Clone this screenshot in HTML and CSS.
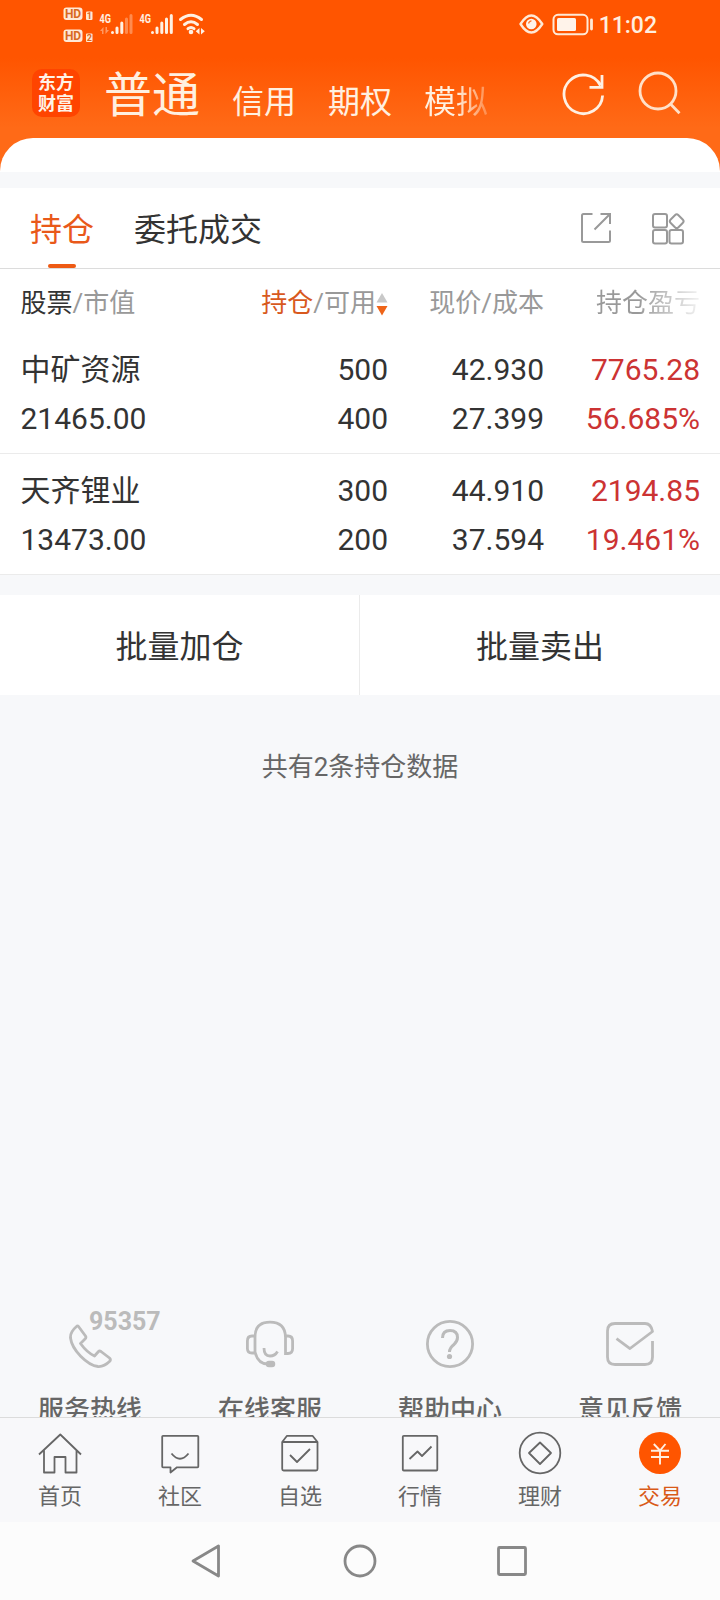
FILE: index.html
```html
<!DOCTYPE html>
<html lang="zh-CN">
<head>
<meta charset="utf-8">
<title>交易</title>
<link rel="stylesheet" href="styles.css">
</head>
<body>
<div class="phone">
  <header class="header">
    <div class="status">
      <svg class="status-left" width="150" height="48" viewBox="60 0 150 48">
        <g fill="#ffe9d6">
          <rect x="63.500" y="7.500" width="19" height="12.500" rx="3"/>
          <rect x="63.500" y="29.500" width="19" height="12.500" rx="3"/>
          <rect x="86" y="11.500" width="6.500" height="8.500" rx="1"/>
          <rect x="86" y="33.500" width="6.500" height="8.500" rx="1"/>
        </g>
        <g class="hd">
          <text x="64.900" y="18.200">HD</text>
          <text x="64.900" y="40.200">HD</text>
          <text class="sim" x="86.800" y="19">1</text>
          <text class="sim" x="86.800" y="41">2</text>
        </g>
        <g class="net">
          <text x="99.500" y="22.800" textLength="11.500" lengthAdjust="spacingAndGlyphs">4G</text>
          <text x="139.500" y="22.800" textLength="11.500" lengthAdjust="spacingAndGlyphs">4G</text>
        </g>
        <g stroke="#fff0e2" stroke-width="3" stroke-linecap="round">
          <path d="M112.500 32.500v0M117 28v4.500M121.800 23v9.500"/>
          <path d="M126.500 19v13.500M131 15.500v17" opacity=".35"/>
          <path d="M152.500 32.500v0M157 28v4.500M161.800 23v9.500M166.500 19v13.500M171.300 15.500v17"/>
        </g>
        <g opacity=".45" fill="#ffe9d6"><path d="M100 31l3.500-4v7h-1.500v-3zM109 30l-3.500 4v-7h1.500v3z"/></g>
        <g fill="none" stroke="#fff0e2" stroke-width="3" stroke-linecap="round">
          <path d="M180.500 19.500q10.500-8.500 21 0M184.500 24.500q6.500-5.500 13 0M188 28.700q3-2.500 6 0"/>
        </g>
        <circle cx="191" cy="32" r="2.300" fill="#fff0e2"/>
        <path d="M199.500 28v6.500l-3.800-3.200zM201 28v6.500l3.800-3.200z" fill="#fff0e2"/>
      </svg>
      <div class="status-right">
        <svg width="75" height="24" viewBox="518 12 75 24" fill="none" stroke="#ffe9d6">
          <path d="M520.500 24q10.800-17 21.800 0q-11 17-21.800 0z" stroke-width="2.400" stroke-linejoin="round"/>
          <circle cx="531.300" cy="24" r="5.300" fill="#fff3ea" stroke="none"/>
          <path d="M528.500 23.500q.500-2.500 3-2.700" stroke="#ff7a33" stroke-width="1.300"/>
          <rect x="553.500" y="14.800" width="34" height="19.500" rx="4.500" stroke-width="2"/>
          <rect x="557" y="18" width="19" height="13" rx="1.500" fill="#fff3ea" stroke="none"/>
          <path d="M591.500 20v9" stroke-width="2.800" stroke-linecap="round"/>
        </svg>
        <span class="clock">11:02</span>
      </div>
    </div>
    <div class="nav">
      <div class="logo"><span>东方</span><span>财富</span></div>
      <nav class="markets">
        <span class="market current">普通</span>
        <span class="market">信用</span>
        <span class="market">期权</span>
        <span class="market fading">模拟</span>
      </nav>
      <svg class="refresh" width="44" height="44" viewBox="562 71 44 44" fill="none" stroke="#fff0e2" stroke-width="2.800">
        <path d="M602.600 94.500A19.300 19.300 0 1 1 600.500 84.500M602 74v12.300H589.500"/>
      </svg>
      <svg class="search" width="44" height="44" viewBox="638 71 44 44" fill="none" stroke="#ffe0c8" stroke-width="2.800">
        <circle cx="658" cy="91" r="18"/><path d="M670.500 104l9 9.300"/>
      </svg>
    </div>
    <div class="sheet"></div>
  </header>

  <section class="tabs">
    <span class="tab active">持仓</span>
    <span class="tab">委托成交</span>
    <svg class="share" width="32" height="32" viewBox="580 212 32 32" fill="none" stroke="#999" stroke-width="2">
      <path d="M592.500 214H583.500Q582 214 582 215.500V240.500Q582 242 583.500 242H608.500Q610 242 610 240.500V230.500M600.500 214H610V224M609.500 214.500L594.500 229.500"/>
    </svg>
    <svg class="modules" width="34" height="34" viewBox="651 212 34 34" fill="none" stroke="#999" stroke-width="2">
      <rect x="653" y="214" width="14" height="13.500" rx="2"/>
      <rect x="653" y="230" width="14" height="13.500" rx="2"/>
      <rect x="669.500" y="230" width="13.500" height="13.500" rx="2"/>
      <rect x="671.200" y="215.700" width="11" height="11" rx="2.500" transform="rotate(45 676.700 221.200)"/>
    </svg>
  </section>

  <section class="table">
    <div class="row head">
      <span class="first"><b>股票</b>/市值</span>
      <span class="sortable"><span><em>持仓</em>/可用</span><svg width="12" height="24" viewBox="0 0 12 24"><path d="M6 1l5.500 9.500H.5z" fill="#c8c8c8"/><path d="M6 23.500l5.500-9.500H.5z" fill="#ee6418"/></svg></span>
      <span>现价/成本</span>
      <span class="fade-head">持仓盈亏</span>
    </div>
    <div class="row">
      <span class="first">中矿资源</span><span>500</span><span>42.930</span><span class="up">7765.28</span>
      <span class="first">21465.00</span><span>400</span><span>27.399</span><span class="up">56.685%</span>
    </div>
    <div class="row">
      <span class="first">天齐锂业</span><span>300</span><span>44.910</span><span class="up">2194.85</span>
      <span class="first">13473.00</span><span>200</span><span>37.594</span><span class="up">19.461%</span>
    </div>
  </section>

  <section class="actions"><span>批量加仓</span><span>批量卖出</span></section>
  <p class="summary">共有2条持仓数据</p>

  <section class="support">
    <div class="help">
      <div class="phone-icon">
        <svg width="48" height="48" viewBox="66 1320 48 48" fill="none" stroke="#bbb" stroke-width="2.800" stroke-linejoin="round">
          <path d="M76.500 1326.500Q70 1332 70.500 1338C72 1350 87 1365 98 1366.500Q104 1367 110 1361Q111 1359.500 109.500 1358L101 1351.500Q99.500 1350.500 98.500 1351.500L94.500 1356Q87 1352.500 80.500 1343.500L85 1339Q86.500 1337.500 85.500 1336L78.500 1326.500Q77.500 1325.500 76.500 1326.500Z"/>
        </svg>
        <span class="hotline">95357</span>
      </div>
      <span class="help-label">服务热线</span>
    </div>
    <div class="help">
      <svg width="52" height="48" viewBox="244 1320 52 48" fill="none" stroke="#bbb" stroke-width="2.800">
        <path d="M255 1353.500V1337Q255 1322.200 270 1322.200T285.500 1337V1353.500H288Q292.600 1353.500 292.600 1348.500V1341Q292.600 1336 288 1336H285.500M255 1336H252Q247.400 1336 247.400 1341V1348.500Q247.400 1353 252 1353H255M255 1352Q258 1364 268 1364"/>
        <path d="M264 1348Q264 1356 270 1356Q275 1356 277.500 1351.500"/>
        <rect x="266.500" y="1361.500" width="8" height="5" rx="2.500" fill="#bbb" stroke-width="1.500"/>
      </svg>
      <span class="help-label">在线客服</span>
    </div>
    <div class="help">
      <svg width="48" height="48" viewBox="426 1320 48 48" fill="none" stroke="#bbb" stroke-width="2.800">
        <circle cx="450" cy="1344" r="22.600"/>
        <path d="M442.500 1338Q442.500 1330.500 450 1330.500T457.500 1337.500Q457.500 1341 454 1344.500Q449.500 1348 449.500 1352" stroke-width="3"/>
        <circle cx="449.500" cy="1356.500" r="2.600" fill="#bbb" stroke="none"/>
      </svg>
      <span class="help-label">帮助中心</span>
    </div>
    <div class="help">
      <svg width="48" height="48" viewBox="606 1320 48 48" fill="none" stroke="#bbb" stroke-width="2.800" stroke-linejoin="round">
        <path d="M652.500 1341V1357Q652.500 1364.500 645 1364.500H615Q607.500 1364.500 607.500 1357V1331Q607.500 1323.500 615 1323.500H645Q651 1323.500 652.500 1331.500L630 1348.500L616.500 1338.500"/>
      </svg>
      <span class="help-label">意见反馈</span>
    </div>
  </section>

  <nav class="tabbar">
    <div class="item">
      <svg width="44" height="44" viewBox="38 1431 44 44" fill="none" stroke="#666" stroke-width="1.800" stroke-linejoin="round">
        <path d="M39 1454.500L60.300 1434.500L81 1454.500M44 1450.500V1472.500H54.500V1457H65.500V1472.500H76.500V1450.500"/>
      </svg><span>首页</span>
    </div>
    <div class="item">
      <svg width="44" height="44" viewBox="158 1431 44 44" fill="none" stroke="#666" stroke-width="1.800" stroke-linejoin="round">
        <path d="M163 1435.800H197.500Q198.300 1435.800 198.300 1436.600V1466.500Q198.300 1467.300 197.500 1467.300H177L170.500 1472.500V1467.300H163Q162.200 1467.300 162.200 1466.500V1436.600Q162.200 1435.800 163 1435.800zM171.500 1453.500Q180 1464 188.500 1453.500"/>
      </svg><span>社区</span>
    </div>
    <div class="item">
      <svg width="44" height="44" viewBox="278 1431 44 44" fill="none" stroke="#666" stroke-width="1.800" stroke-linejoin="round">
        <path d="M282.200 1442L287 1435.800H312.500L317.500 1442V1469Q317.500 1470.500 316 1470.500H283.700Q282.200 1470.500 282.200 1469zM282.200 1442H317.500M290 1455L297 1462L310 1449"/>
      </svg><span>自选</span>
    </div>
    <div class="item">
      <svg width="44" height="44" viewBox="398 1431 44 44" fill="none" stroke="#666" stroke-width="1.800" stroke-linejoin="round">
        <rect x="402.800" y="1435.800" width="34.500" height="34.700" rx="1"/><path d="M409.500 1459L417.500 1451.500L422 1456L431.500 1446.500"/>
      </svg><span>行情</span>
    </div>
    <div class="item">
      <svg width="44" height="44" viewBox="518 1431 44 44" fill="none" stroke="#666" stroke-width="1.800" stroke-linejoin="round">
        <circle cx="540" cy="1453" r="20.300"/><path d="M540 1442.500L551 1453L540 1464L529 1453z"/>
      </svg><span>理财</span>
    </div>
    <div class="item selected">
      <svg width="44" height="44" viewBox="638 1431 44 44" fill="none" stroke="#fff0e2" stroke-width="1.900">
        <circle cx="660" cy="1453" r="21" fill="#ff5500" stroke="none"/>
        <path d="M653.800 1444L660 1450.500L665.500 1444M651 1450.700H669M651 1457H669M660 1450.500V1464.500"/>
      </svg><span>交易</span>
    </div>
  </nav>

  <footer class="system">
    <svg width="340" height="40" viewBox="190 1541 340 40" fill="none" stroke="#888" stroke-width="2.800" stroke-linejoin="round">
      <path d="M218.500 1546V1576L193 1561z"/>
      <circle cx="360" cy="1561" r="15"/>
      <rect x="498.500" y="1547.500" width="27" height="27" rx="1"/>
    </svg>
  </footer>
</div>
</body>
</html>
```
FILE: styles.css
```css
* { box-sizing: border-box; }
body {
  margin: 0;
  font-family: Roboto, "Noto Sans CJK SC", sans-serif;
  color: #333;
  background: #f7f8fa;
}
svg { display: block; flex: none; }
.phone {
  display: flex;
  flex-direction: column;
  width: 720px;
  height: 1600px;
  overflow: hidden;
}

.header {
  flex: none;
  height: 172px;
  background: linear-gradient(#ff5500 0, #ff5500 58px, #ff6a17 128px, #ff6a17 172px);
}
.status {
  display: flex;
  justify-content: space-between;
  height: 48px;
  padding: 0 63px 0 60px;
}
.status-right { display: flex; align-items: center; gap: 6px; }
.clock { padding-top: 3px; font-size: 23px; font-weight: 500; line-height: 45px; color: #ffeedf; }
.hd { font: bold 12px Roboto, sans-serif; fill: #d9691f; }
.sim { font-size: 9px; }
.net { font: bold 13px Roboto, sans-serif; fill: #fff0e2; }

.nav { display: flex; height: 90px; padding: 0 38px 0 32px; }
.logo {
  display: flex;
  flex-direction: column;
  width: 48px;
  height: 48px;
  margin-top: 21px;
  padding-top: 4px;
  border-radius: 10px;
  background: #ff4400;
  color: #fff3e8;
  font-size: 18px;
  font-weight: 700;
  line-height: 20.500px;
  text-align: center;
}
.markets {
  display: flex;
  align-items: flex-start;
  gap: 32px;
  flex: 1;
  padding: 12px 0 0 24px;
  color: #fff0e0;
}
.market { font-size: 32px; line-height: 84px; white-space: nowrap; }
.market.current { font-size: 48px; line-height: 72px; }
.fading {
  background: linear-gradient(90deg, #fff0e0 50%, #ff8a48 100%);
  -webkit-background-clip: text;
  background-clip: text;
  color: transparent;
}
.refresh { margin: 24px 32px 0 0; }
.search { margin-top: 23px; }
.sheet { height: 34px; border-radius: 33px 33px 0 0; background: #fff; }

.tabs {
  display: flex;
  align-items: center;
  flex: none;
  height: 81px;
  margin-top: 16px;
  padding: 0 35px 0 30px;
  border-bottom: 1px solid #dcdcdc;
  background: #fff;
}
.tab { position: relative; margin-right: 40px; padding-top: 4px; font-size: 32px; line-height: 76px; }
.tab.active { color: #e9591a; }
.tab.active::after {
  content: "";
  position: absolute;
  left: 18px;
  bottom: 0;
  width: 28px;
  height: 4px;
  border-radius: 2px;
  background: #ee5a14;
}
.share { margin-left: auto; margin-right: 39px; }
.modules { margin-top: 2px; }

.table { flex: none; background: #fff; }
.row {
  display: grid;
  grid-template-columns: 200px 168px 156px 156px;
  grid-auto-rows: 49px;
  height: 121px;
  padding: 12px 20px 0;
  border-bottom: 1px solid #ebebeb;
  font-size: 30px;
  line-height: 49px;
  text-align: right;
}
.first { padding-left: 0.500px; text-align: left; }
.up { color: #cc3333; }
.row.head {
  height: 64px;
  padding-top: 10px;
  border: 0;
  color: #999;
  font-size: 26px;
}
.head b { font-weight: 400; color: #333; }
.head em { font-style: normal; color: #d8591e; }
.sortable { display: flex; align-items: center; justify-content: flex-end; }
.fade-head {
  background: linear-gradient(90deg, #999 60%, #eee 98%);
  -webkit-background-clip: text;
  background-clip: text;
  color: transparent;
}

.actions {
  display: grid;
  grid-template-columns: 360px 360px;
  flex: none;
  height: 100px;
  margin-top: 20px;
  background: #fff;
  font-size: 32px;
  line-height: 96px;
  text-align: center;
}
.actions span { padding-top: 4px; }
.actions span:first-child { border-right: 1px solid #ebebeb; }
.summary {
  flex: none;
  margin: 52px 0 0;
  font-size: 26px;
  line-height: 40px;
  text-align: center;
  color: #666;
}

.support {
  display: grid;
  grid-template-columns: repeat(4, 180px);
  height: 117px;
  margin-top: auto;
  padding-top: 20px;
  flex: none;
  overflow: hidden;
}
.help { display: flex; flex-direction: column; align-items: center; gap: 22px; }
.phone-icon { position: relative; }
.hotline {
  position: absolute;
  left: 23px;
  top: -11px;
  color: #bbb;
  font-size: 25px;
  font-weight: 700;
  line-height: 26px;
}
.help-label { font-size: 26px; font-weight: 500; line-height: 40px; color: #666; }

.tabbar {
  display: grid;
  grid-template-columns: repeat(6, 120px);
  flex: none;
  height: 105px;
  padding-top: 13px;
  border-top: 1px solid #dcdcdc;
  background: #f8f8fa;
}
.item {
  display: flex;
  flex-direction: column;
  align-items: center;
  gap: 6px;
  font-size: 22px;
  line-height: 32px;
  color: #666;
}
.selected { color: #d95a18; }

.system {
  display: flex;
  justify-content: center;
  align-items: center;
  flex: none;
  height: 78px;
  background: #fcfcfc;
}
```
